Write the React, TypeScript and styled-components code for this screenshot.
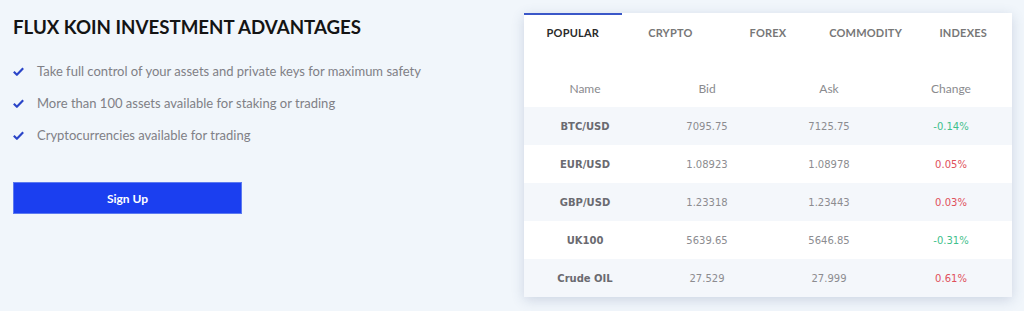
import React from "react";
import styled, { createGlobalStyle } from "styled-components";

const Global = createGlobalStyle`
  html, body { margin: 0; padding: 0; background: #f1f6fb; }
  body { font-family: "Lato", "Noto Sans", sans-serif; }
`;

const Page = styled.div`
  display: flex;
  width: 1024px;
  height: 311px;
  box-sizing: border-box;
  padding: 13px 12px 0 13px;
  justify-content: space-between;
`;

const Left = styled.div`
  display: flex;
  flex-direction: column;
`;

const Heading = styled.h2`
  margin: 2px 0 0;
  font-size: 18.7px;
  font-weight: 700;
  color: #141414;
  line-height: 24px;
`;

const List = styled.ul`
  list-style: none;
  margin: 23px 0 0;
  padding: 0;
  display: flex;
  flex-direction: column;
  gap: 14px;
`;

const Item = styled.li`
  display: flex;
  align-items: center;
  gap: 13px;
  font-size: 13px;
  color: #808086;
  line-height: 18px;
`;

const Check = styled.svg`
  width: 11px;
  height: 9px;
  flex: none;
`;

const Button = styled.button`
  margin-top: 38px;
  width: 229px;
  height: 32px;
  background: #1b3ff0;
  border: 1px solid #5c7af0;
  color: #fff;
  font-family: inherit;
  font-weight: 700;
  font-size: 12px;
  cursor: pointer;
`;

const Card = styled.div`
  width: 488px;
  height: 284px;
  background: #fff;
  box-shadow: 0 3px 12px rgba(60, 80, 130, 0.2);
  display: flex;
  flex-direction: column;
`;

const Tabs = styled.div`
  display: grid;
  grid-template-columns: repeat(5, 1fr);
  height: 38px;
`;

const Tab = styled.div<{ $active?: boolean }>`
  display: flex;
  align-items: center;
  justify-content: center;
  font-size: 11px;
  font-weight: 700;
  letter-spacing: 0.2px;
  color: ${(p) => (p.$active ? "#2a2a2a" : "#777")};
  border-top: 2px solid ${(p) => (p.$active ? "#3a57c8" : "transparent")};
  box-sizing: border-box;
  padding-bottom: 2px;
`;

const Row = styled.div<{ $shade?: boolean }>`
  display: grid;
  grid-template-columns: repeat(4, 1fr);
  height: 38px;
  align-items: center;
  background: ${(p) => (p.$shade ? "#f4f7fb" : "#fff")};
  font-family: "DejaVu Sans", Verdana, sans-serif;
  font-size: 10px;
`;

const HeadRow = styled.div`
  display: grid;
  grid-template-columns: repeat(4, 1fr);
  height: 56px;
  align-items: end;
  padding-bottom: 11px;
  box-sizing: border-box;
  font-size: 12px;
  color: #8a8a8e;
`;

const HeadCell = styled.div`
  text-align: center;
  line-height: 14px;
`;

const Cell = styled.div<{ $kind?: "name" | "num" | "up" | "down" }>`
  text-align: center;
  font-weight: ${(p) => (p.$kind === "name" ? 700 : 400)};
  color: ${(p) =>
    p.$kind === "name"
      ? "#6a6a70"
      : p.$kind === "up"
      ? "#3fbf8c"
      : p.$kind === "down"
      ? "#e0505c"
      : "#8c8c90"};
`;

const rows = [
  { name: "BTC/USD", bid: "7095.75", ask: "7125.75", change: "-0.14%" },
  { name: "EUR/USD", bid: "1.08923", ask: "1.08978", change: "0.05%" },
  { name: "GBP/USD", bid: "1.23318", ask: "1.23443", change: "0.03%" },
  { name: "UK100", bid: "5639.65", ask: "5646.85", change: "-0.31%" },
  { name: "Crude OIL", bid: "27.529", ask: "27.999", change: "0.61%" },
];

const items = [
  "Take full control of your assets and private keys for maximum safety",
  "More than 100 assets available for staking or trading",
  "Cryptocurrencies available for trading",
];

const CheckIcon = () => (
  <Check viewBox="0 0 12 10">
    <path d="M0.8 5.3 L4.2 8.6 L11.2 1.4" fill="none" stroke="#2a45c8" strokeWidth="2.4" strokeLinejoin="round" />
  </Check>
);

export default function App() {
  return (
    <>
      <Global />
      <Page>
        <Left>
          <Heading>FLUX KOIN INVESTMENT ADVANTAGES</Heading>
          <List>
            {items.map((t) => (
              <Item key={t}>
                <CheckIcon />
                {t}
              </Item>
            ))}
          </List>
          <Button>Sign Up</Button>
        </Left>
        <Card>
          <Tabs>
            <Tab $active>POPULAR</Tab>
            <Tab>CRYPTO</Tab>
            <Tab>FOREX</Tab>
            <Tab>COMMODITY</Tab>
            <Tab>INDEXES</Tab>
          </Tabs>
          <HeadRow>
            <HeadCell>Name</HeadCell>
            <HeadCell>Bid</HeadCell>
            <HeadCell>Ask</HeadCell>
            <HeadCell>Change</HeadCell>
          </HeadRow>
          {rows.map((r, i) => (
            <Row key={r.name} $shade={i % 2 === 0}>
              <Cell $kind="name">{r.name}</Cell>
              <Cell $kind="num">{r.bid}</Cell>
              <Cell $kind="num">{r.ask}</Cell>
              <Cell $kind={r.change.startsWith("-") ? "up" : "down"}>{r.change}</Cell>
            </Row>
          ))}
        </Card>
      </Page>
    </>
  );
}
